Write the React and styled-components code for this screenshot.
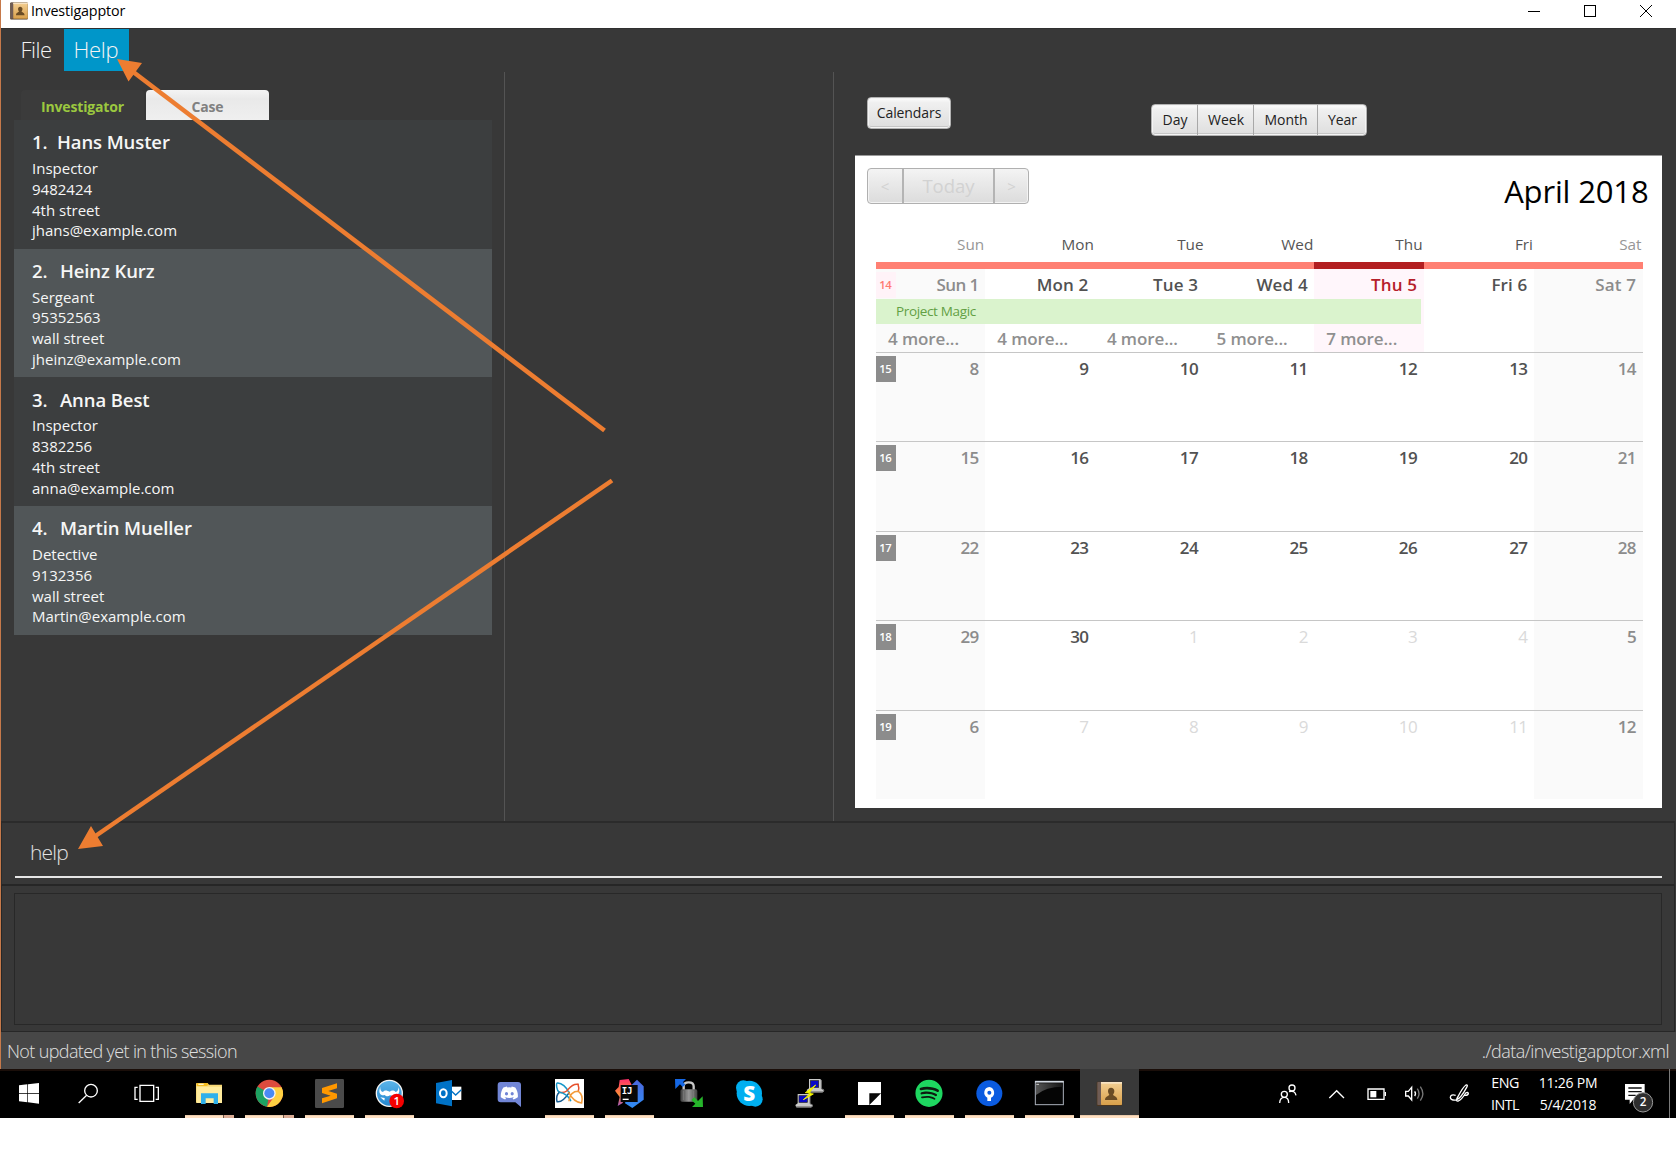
import React from "react";
import styled, { createGlobalStyle } from "styled-components";
import { FaDiscord, FaSpotify } from "react-icons/fa";

const GlobalStyle = createGlobalStyle`
  * { box-sizing: border-box; }
  body { margin: 0; background: #fff; font-family: "Open Sans", "Noto Sans", sans-serif; }
`;

const Screen = styled.div`
  position: relative;
  width: 1676px;
  height: 1155px;
  overflow: hidden;
  background: #fff;
  white-space: nowrap;
`;

/* ---------- application window ---------- */
const Window = styled.div`
  display: flex;
  flex-direction: column;
  height: 1069px;
  border-left: 1px solid #c6794a;
  background: #383838;
`;
const TitleBar = styled.div`
  display: flex;
  align-items: center;
  height: 28px;
  padding: 0 24px 7px 9px;
  background: #fff;
`;
const Title = styled.span`
  flex: 1;
  margin-left: 3px;
  font-size: 14.3px;
  letter-spacing: -0.15px;
  color: #000;
`;
const WindowButtons = styled.div`
  display: flex;
  gap: 44px;
`;
const MenuBar = styled.div`
  display: flex;
  height: 43px;
  border-top: 1px solid #303030;
`;
const MenuItem = styled.div`
  width: ${(p) => p.$width}px;
  padding-left: ${(p) => p.$pad}px;
  line-height: 40px;
  font-size: 22px;
  font-weight: 300;
  letter-spacing: ${(p) => p.$spacing}px;
  color: #f4f4f4;
  background: ${(p) => (p.$active ? "#0096c9" : "transparent")};
`;
const Panes = styled.div`
  display: flex;
  height: 750px;
`;
const Divider = styled.div`
  width: 1px;
  margin-top: 1px;
  background: #545454;
`;
const LeftPane = styled.div`
  width: 503px;
  padding: 19px 12px 0 13px;
`;
const MiddlePane = styled.div`
  width: 328px;
`;
const RightPane = styled.div`
  width: 841px;
  padding: 0 13px 0 21px;
`;

/* ---------- investigator list ---------- */
const Tabs = styled.div`
  display: flex;
  gap: 2px;
  padding-left: 7px;
`;
const Tab = styled.div`
  width: 123px;
  height: 30px;
  padding-top: 2px;
  border-radius: 4px 4px 0 0;
  text-align: center;
  line-height: 29px;
  font-size: 14px;
  font-weight: 700;
  letter-spacing: -0.15px;
  color: ${(p) => (p.$active ? "#9bc83f" : "#808080")};
  background: ${(p) => (p.$active ? "#3b3b3b" : "linear-gradient(#f4f4f4, #e9e9e9 30%, #efefef)")};
`;
const PersonCard = styled.div`
  height: 128.7px;
  padding: 9.2px 18px 0;
  color: #f6f6f6;
  background: ${(p) => (p.$alt ? "#515658" : "#3c3e3f")};
`;
const PersonName = styled.div`
  display: flex;
  gap: ${(p) => (p.$narrow ? 9.5 : 12.5)}px;
  margin-bottom: 2.8px;
  line-height: 26px;
  font-size: 18.5px;
  font-weight: 600;
  letter-spacing: -0.1px;
`;
const PersonLine = styled.div`
  line-height: 20.8px;
  font-size: 15px;
  letter-spacing: 0;
`;

/* ---------- calendar ---------- */
const CalendarTools = styled.div`
  display: flex;
  align-items: flex-start;
  height: 84px;
  padding: 26px 0 0 12px;
`;
const buttonFace = `
  border: 1px solid #b2b2b2;
  background: linear-gradient(#fdfdfd, #f0f0f0 15%, #dedede);
  box-shadow: inset 0 0 0 1px #f4f4f4, inset 0 -2px 0 #c6c6c6;
`;
const Button = styled.div`
  ${buttonFace}
  width: 84px;
  height: 32px;
  border-radius: 4px;
  text-align: center;
  line-height: 29px;
  font-size: 14px;
  letter-spacing: -0.08px;
  color: #222;
`;
const Segments = styled.div`
  ${buttonFace}
  display: flex;
  width: 216px;
  height: 32px;
  margin: 7px 0 0 200px;
  border-radius: 4px;
`;
const Segment = styled.div`
  width: ${(p) => p.$width}px;
  padding-left: 1px;
  border-left: ${(p) => (p.$first ? "0" : "1px solid #a8a8a8")};
  text-align: center;
  line-height: 29px;
  font-size: 14px;
  color: #222;
`;
const Sheet = styled.div`
  height: 653px;
  padding: 0 19.5px 0 21px;
  border-top: 1px solid #9a9a9a;
  background: #fff;
`;
const SheetHead = styled.div`
  display: flex;
  justify-content: space-between;
  height: 76px;
  margin: 0 -6px 0 -9px;
  padding-top: 12px;
`;
const NavGroup = styled.div`
  display: flex;
  width: 162px;
  height: 36px;
  border: 1px solid #b0b0b0;
  border-radius: 4px;
  background: linear-gradient(#f4f4f4, #ececec 30%, #dcdcdc);
  box-shadow: inset 0 0 0 1px #f3f3f3;
`;
const NavButton = styled.div`
  width: ${(p) => p.$width}px;
  border-left: ${(p) => (p.$first ? "0" : "2px solid #b4b4b4")};
  text-align: center;
  line-height: 34px;
  font-size: ${(p) => p.$size}px;
  color: #d2d2d2;
`;
const MonthTitle = styled.div`
  margin-top: 3px;
  line-height: 40px;
  font-size: 31px;
  letter-spacing: -0.15px;
  color: #000;
`;
const columns = "109.2px repeat(3, 109.7px) 109.3px 110.4px 1fr";
const DayNames = styled.div`
  display: grid;
  grid-template-columns: ${columns};
  height: 30px;
  line-height: 25px;
  text-align: right;
  font-size: 15.3px;
  font-weight: 500;
`;
const DayName = styled.div`
  padding-right: 1px;
  color: ${(p) => (p.$weekend ? "#969696" : "#555")};
`;
const HeaderBar = styled.div`
  display: grid;
  grid-template-columns: ${columns};
  height: 7px;
  background: #ff8073;
`;
const TodayMark = styled.div`
  grid-column: 5;
  background: #b21e20;
`;
const FirstWeek = styled.div`
  display: grid;
  grid-template-columns: ${columns};
  grid-template-rows: 30px 24.5px 28.5px;
`;
const Week = styled.div`
  display: grid;
  grid-template-columns: ${columns};
  height: 89.4px;
  border-top: 1px solid #c6c6c6;
`;
const Day = styled.div`
  display: flex;
  justify-content: space-between;
  grid-column: ${(p) => p.$col};
  grid-row: ${(p) => (p.$tall ? "1 / 4" : "1")};
  padding: ${(p) => (p.$tall ? 3.5 : 4)}px 6.5px 0 0;
  background: ${(p) => (p.$today ? "#fff6fb" : p.$weekend ? "#fafafa" : "#fff")};
`;
const toneColor = { normal: "#525252", weekend: "#8c8c8c", faded: "#dadada", today: "#b5202a" };
const DayNumber = styled.span`
  margin-left: auto;
  line-height: 24px;
  font-size: 17px;
  font-weight: ${(p) => (p.$tone === "faded" ? 500 : 600)};
  letter-spacing: ${(p) => (p.$wide ? "0.15px" : "-0.6px")};
  color: ${(p) => toneColor[p.$tone]};
`;
const WeekNumber = styled.span`
  width: 20px;
  height: 26px;
  margin-top: -1px;
  padding-right: 1.5px;
  text-align: center;
  line-height: 26px;
  font-size: 11.3px;
  font-weight: 600;
  letter-spacing: -0.4px;
  color: ${(p) => (p.$current ? "#ff7a72" : "#fff")};
  background: ${(p) => (p.$current ? "#fff3f8" : "#8c8c8c")};
`;
const EventBar = styled.div`
  grid-row: 2;
  grid-column: 1 / 6;
  margin-right: 2.5px;
  padding-left: 20px;
  line-height: 24px;
  font-size: 13.5px;
  letter-spacing: -0.35px;
  color: #62a044;
  background: #daf3cd;
`;
const More = styled.div`
  grid-row: 3;
  grid-column: ${(p) => p.$col};
  padding: 3.6px 0 0 12px;
  line-height: 24px;
  font-size: 17px;
  font-weight: 600;
  letter-spacing: -0.1px;
  color: #8f8f8f;
`;

/* ---------- command box, result box, status bar ---------- */
const CommandArea = styled.div`
  height: 65px;
  margin-right: 1px;
  padding: 0 12px 0 13px;
  border: 1px solid #2b2b2b;
  border-width: 2px 1px;
  border-bottom-color: #262626;
`;
const CommandInput = styled.div`
  height: 55px;
  padding: 6px 0 0 15px;
  border-bottom: 2px solid #e6e6e6;
  line-height: 46px;
  font-size: 21px;
  font-weight: 300;
  letter-spacing: -0.8px;
  color: #e2e2e2;
`;
const ResultArea = styled.div`
  height: 146px;
  margin-right: 1px;
  padding: 7px 12px 6px;
  border: 1px solid #272727;
  border-top: 0;
`;
const ResultBox = styled.div`
  height: 132px;
  border: 1px solid #282828;
`;
const StatusBar = styled.div`
  display: flex;
  flex: 1;
  justify-content: space-between;
  align-items: center;
  padding: 0 7px 0 6px;
  font-size: 18px;
  font-weight: 300;
  color: #e0e0e0;
  background: #474747;
`;
const StatusText = styled.span`
  letter-spacing: ${(p) => p.$spacing}px;
`;

/* ---------- taskbar ---------- */
const Taskbar = styled.div`
  display: flex;
  height: 49px;
  border-top: 2px solid #1a0e09;
  background: #000;
  color: #fff;
`;
const SystemButtons = styled.div`
  display: flex;
  width: 179px;
`;
const Task = styled.div`
  display: flex;
  flex-direction: column;
  width: 60px;
  height: 49px;
  margin-top: -2px;
  padding-left: 1px;
`;
const TaskFace = styled.div`
  display: flex;
  height: 46px;
  padding-top: 2px;
  margin-left: -1px;
  background: ${(p) => (p.$active ? "linear-gradient(90deg, transparent 1px, #393939 1px)" : "transparent")};
`;
const Underline = styled.div`
  display: flex;
  justify-content: flex-end;
  width: ${(p) => (p.$active ? 59 : 49)}px;
  height: 3px;
  margin-left: ${(p) => (p.$active ? 0 : 5)}px;
  background: ${(p) => (p.$open ? "linear-gradient(#dcbc9c, #ffe0c2 40%)" : "transparent")};
`;
const Stack = styled.div`
  width: 11px;
  border-left: 1px solid #6e5547;
  background: #d9ab94;
`;
const Tray = styled.div`
  display: flex;
  flex: 1;
  justify-content: flex-end;
`;
const TrayText = styled.div`
  width: ${(p) => p.$width}px;
  padding-top: 1.4px;
  text-align: center;
  line-height: 22px;
  font-size: ${(p) => p.$size}px;
  letter-spacing: ${(p) => p.$spacing}px;
`;
const ShowDesktop = styled.div`
  width: 7px;
  margin-top: -2px;
  border-left: 1px solid #7a7a7a;
`;
const Arrows = styled.svg`
  position: absolute;
  top: 0;
  left: 0;
`;
const IconSvg = styled.svg`
  display: block;
  flex: none;
`;
const HiddenSvg = styled.svg`
  position: absolute;
`;

/* Taskbar pictograms share a 180 x 141 canvas, three units to a pixel. */
const Glyph = ({ x, width = 60, children }) => (
  <IconSvg width={width} height="47" viewBox={`${x} 33 ${width * 3} 141`}>
    {children}
  </IconSvg>
);

const BookDrawing = () => (
  <g>
    <rect x="770" y="65" width="76" height="73" rx="3" fill="#4b3620" />
    <rect x="772" y="66" width="13" height="69" rx="2" fill="#6f5c55" />
    <rect x="783" y="66" width="63" height="69" rx="2" fill="url(#bookFace)" />
    <rect x="783" y="66" width="63" height="5" fill="#f8e4c4" />
    <path d="M813 83c-6 0-9 4-9 10 0 5 2 8 4 11-1 4-13 4-13 16h37c0-12-12-12-13-16 2-3 4-6 4-11 0-6-4-10-10-10z" fill="#6a4c25" />
  </g>
);

const Defs = () => (
  <HiddenSvg width="0" height="0">
    <defs>
      <linearGradient id="bookFace" x1="0" y1="0" x2="0" y2="1">
        <stop offset="0" stopColor="#f3cf93" />
        <stop offset="1" stopColor="#d9a04a" />
      </linearGradient>
      <linearGradient id="terminalFace" x1="0" y1="0" x2="1" y2="0">
        <stop offset="0" stopColor="#555" />
        <stop offset="1" stopColor="#151515" />
      </linearGradient>
      <linearGradient id="ideaLeft" x1="0" y1="0" x2="0" y2="1">
        <stop offset="0" stopColor="#fe2f6b" />
        <stop offset=".55" stopColor="#fd8a3a" />
        <stop offset="1" stopColor="#a455b8" />
      </linearGradient>
      <linearGradient id="ideaRight" x1="0" y1="0" x2="0" y2="1">
        <stop offset="0" stopColor="#4d66dc" />
        <stop offset="1" stopColor="#2f8df5" />
      </linearGradient>
      <linearGradient id="lockFace" x1="0" y1="0" x2="1" y2="0">
        <stop offset="0" stopColor="#3c3c3c" />
        <stop offset=".5" stopColor="#9a9a9a" />
        <stop offset="1" stopColor="#444" />
      </linearGradient>
      <linearGradient id="sky" x1="0" y1="0" x2="0" y2="1">
        <stop offset="0" stopColor="#5db5ea" />
        <stop offset="1" stopColor="#2387cf" />
      </linearGradient>
    </defs>
  </HiddenSvg>
);

const Explorer = () => (
  <Glyph x={537}>
    <path d="M588 72q0-3 3-3h31l5 5h39v54H588z" fill="#f7d774" />
    <path d="M590 80h76v49h-76z" fill="#ffeb9c" />
    <path d="M590 69h30q5 0 5 4t-5 5h-30z" fill="#f5bd20" />
    <path d="M595 71h16v4h-16z" fill="#fff6d0" />
    <path d="M603 132v-32h51v32h-13v-17h-24v17z" fill="#2fb0ea" />
  </Glyph>
);
const Chrome = () => (
  <Glyph x={717}>
    <circle cx="808" cy="100" r="41" fill="#dd4b3e" />
    <path d="M808 100L772 80a41 41 0 0 0 29 60z" fill="#1da262" />
    <path d="M808 100L790 111 772 80z" fill="#1da262" />
    <path d="M808 82h37a41 41 0 0 1-44 58l23-32z" fill="#ffd042" />
    <circle cx="808" cy="100" r="19" fill="#f4f4f4" />
    <circle cx="808" cy="100" r="15" fill="#4a8af4" />
  </Glyph>
);
const Sublime = () => (
  <Glyph x={897}>
    <rect x="945" y="57" width="87" height="87" rx="4" fill="#4a4a4a" />
    <path d="M966 84l45-14v15l-26 8 26 8v14l-45 15v-15l26-8-26-8z" fill="#ff9800" />
  </Glyph>
);
const Messenger = () => (
  <Glyph x={1077}>
    <circle cx="1168" cy="100" r="39" fill="url(#sky)" stroke="#f4f4f4" strokeWidth="4" />
    <path d="M1141 81c-1 8 2 14 8 15 6-8 13-4 20-1 6-4 12-5 18 1 7-2 9-8 8-15 6 13 2 24-9 27-7 2-11-2-16-2-6 5-12 3-16-1-8 4-22-3-13-24z" fill="#fff" />
    <path d="M1141 112l13 2-1 8z" fill="#fff" />
    <circle cx="1190" cy="123" r="22" fill="#f40000" />
    <text x="1190" y="135" textAnchor="middle" fontFamily="Open Sans, sans-serif" fontSize="34" fontWeight="600" fill="#fff">1</text>
  </Glyph>
);
const Outlook = () => (
  <Glyph x={-3}>
    <rect x="84" y="80" width="40" height="40" fill="#fff" />
    <path d="M94 93l13 12 17-16" fill="none" stroke="#0072c6" strokeWidth="4" />
    <path d="M48 69l48-9v79l-48-9z" fill="#0072c6" />
    <ellipse cx="70" cy="100" rx="10" ry="12" fill="none" stroke="#fff" strokeWidth="6" />
  </Glyph>
);
const Discord = () => (
  <Glyph x={177}>
    <path d="M242 66h52q9 0 9 9v66l-17-14h-44q-9 0-9-9V75q0-9 9-9z" fill="#7286d6" />
    <FaDiscord x="240" y="71" size={56} color="#fff" />
  </Glyph>
);
const Butterfly = () => (
  <Glyph x={357}>
    <rect x="405" y="57" width="87" height="87" fill="#fff" />
    <g fill="none" strokeWidth="4.5" strokeLinejoin="round" strokeLinecap="round">
      <path d="M446 97C440 82 425 68 412 69c-4 1-3 22 6 28" stroke="#1596c8" />
      <path d="M474 73c-18-3-26 12-34 20-6 5-14 5-22 4" stroke="#e6512d" />
      <path d="M474 73c3 8 3 15 1 21" stroke="#e6512d" />
      <path d="M418 97c-8 6-9 18-7 28 16 3 28-14 37-28" stroke="#155b91" />
      <path d="M418 97c16 2 26 10 34 25" stroke="#1596c8" />
      <path d="M475 94c-18 0-26 12-28 28M475 94c12 8 13 22 10 35-17-2-30-14-39-32" stroke="#f39a38" />
    </g>
  </Glyph>
);
const Idea = () => (
  <Glyph x={537}>
    <path d="M651 59l20 20v40l-34 25-22-14 16-51z" fill="url(#ideaRight)" />
    <path d="M599 60l27-3 12 23-31 50-14 8 6-27-14-19 11-11z" fill="url(#ideaLeft)" />
    <rect x="602" y="75" width="51" height="51" fill="#080808" />
    <text x="605" y="103" fontFamily="DejaVu Sans Mono, monospace" fontSize="27" fontWeight="700" fill="#fff">IJ</text>
    <path d="M608 118h18" stroke="#fff" strokeWidth="4" />
  </Glyph>
);
const Lock = () => (
  <Glyph x={717}>
    <path d="M791 90V79q0-12 15-12t15 12v11" fill="none" stroke="#c9c9c9" strokeWidth="7" />
    <rect x="781" y="88" width="51" height="37" rx="5" fill="url(#lockFace)" />
    <path d="M790 92v28M800 92v28M811 92v28M821 92v28" stroke="#858585" strokeWidth="2" />
    <path d="M765 57h33l-9 9 7 8-8 7-8-8-14 14z" fill="#1568e6" />
    <path d="M849 141h-33l10-10-12-11 9-9 11 12 14-14z" fill="#26b52b" />
  </Glyph>
);
const Skype = () => (
  <Glyph x={897}>
    <circle cx="970" cy="83" r="22" fill="#00aff0" />
    <circle cx="1006" cy="118" r="22" fill="#00aff0" />
    <circle cx="988" cy="100" r="38" fill="#00aff0" />
    <text x="988" y="122" textAnchor="middle" fontFamily="Open Sans, sans-serif" fontSize="62" fontWeight="800" fill="#fff">S</text>
  </Glyph>
);
const Computer = ({ x, y }) => (
  <g transform={`translate(${x} ${y})`}>
    <path d="M6 0h34l3 3v26l7 4v6L43 38H1l-2-5 7-5z" fill="#c9c9c9" />
    <path d="M40 2l3 2v25l8 4-4 7H2" fill="none" stroke="#777" strokeWidth="3" />
    <rect x="10" y="5" width="25" height="20" fill="#0808c8" stroke="#222" strokeWidth="2" />
  </g>
);
const Putty = () => (
  <Glyph x={1077}>
    <Computer x={1161} y={57} />
    <Computer x={1127} y={102} />
    <path d="M1187 75l-31 23 17 1-23 20 30-17-14-2z" fill="#ffff00" stroke="#e8e800" strokeWidth="3" />
  </Glyph>
);
const Sticky = () => (
  <Glyph x={-3}>
    <path d="M54 66h69v34H88v35H54z" fill="#fff" />
    <path d="M91 103h27l-27 27z" fill="#0a0a0a" />
    <path d="M123 100v35H88z" fill="#fff" />
  </Glyph>
);
const Spotify = () => (
  <Glyph x={177}>
    <circle cx="267" cy="100" r="38" fill="#0d1a10" />
    <FaSpotify x="225" y="58" size={84} color="#1ed760" />
  </Glyph>
);
const SourceTree = () => (
  <Glyph x={357}>
    <circle cx="448" cy="100" r="39" fill="#0b5be0" />
    <path d="M448 81a17 17 0 0 0-6 32v10h11v-10a17 17 0 0 0-5-32z" fill="#fff" />
    <circle cx="448" cy="98" r="6" fill="#0b5be0" />
  </Glyph>
);
const Terminal = () => (
  <Glyph x={537}>
    <rect x="586" y="65" width="84" height="69" fill="#050505" stroke="#aab0bb" strokeWidth="3" />
    <path d="M588 70h80v10q-50 0-80 25z" fill="url(#terminalFace)" />
    <path d="M585 65h86" stroke="#d4dae2" strokeWidth="5" />
    <path d="M589 73h8" stroke="#ccc" strokeWidth="3" />
  </Glyph>
);
const AddressBook = () => (
  <Glyph x={717}>
    <BookDrawing />
  </Glyph>
);

const tasks = [
  { Icon: Explorer, open: true, stacked: true },
  { Icon: Chrome, open: true, stacked: true },
  { Icon: Sublime, open: true },
  { Icon: Messenger, open: true },
  { Icon: Outlook },
  { Icon: Discord },
  { Icon: Butterfly, open: true },
  { Icon: Idea, open: true },
  { Icon: Lock },
  { Icon: Skype },
  { Icon: Putty },
  { Icon: Sticky, open: true },
  { Icon: Spotify, open: true },
  { Icon: SourceTree, open: true },
  { Icon: Terminal, open: true },
  { Icon: AddressBook, open: true, active: true },
];

const people = [
  ["Hans Muster", "Inspector", "9482424", "4th street", "jhans@example.com"],
  ["Heinz Kurz", "Sergeant", "95352563", "wall street", "jheinz@example.com"],
  ["Anna Best", "Inspector", "8382256", "4th street", "anna@example.com"],
  ["Martin Mueller", "Detective", "9132356", "wall street", "Martin@example.com"],
];

const dayNames = ["Sun", "Mon", "Tue", "Wed", "Thu", "Fri", "Sat"];
const moreCounts = [4, 4, 4, 5, 7];
const weeks = [
  { number: 15, days: [8, 9, 10, 11, 12, 13, 14] },
  { number: 16, days: [15, 16, 17, 18, 19, 20, 21] },
  { number: 17, days: [22, 23, 24, 25, 26, 27, 28] },
  { number: 18, days: [29, 30, 1, 2, 3, 4, 5], fadedFrom: 2 },
  { number: 19, days: [6, 7, 8, 9, 10, 11, 12], fadedFrom: 0 },
];
const isWeekend = (i) => i === 0 || i === 6;

const Calendar = () => (
  <Sheet>
    <SheetHead>
      <NavGroup>
        <NavButton $first $width={34} $size={15}>&lt;</NavButton>
        <NavButton $width={91.5} $size={18.5}>Today</NavButton>
        <NavButton $width={35} $size={15}>&gt;</NavButton>
      </NavGroup>
      <MonthTitle>April 2018</MonthTitle>
    </SheetHead>
    <DayNames>
      {dayNames.map((name, i) => (
        <DayName key={name} $weekend={isWeekend(i)}>{name}</DayName>
      ))}
    </DayNames>
    <HeaderBar><TodayMark /></HeaderBar>
    <FirstWeek>
      {dayNames.map((name, i) => (
        <Day key={name} $tall $col={i + 1} $weekend={isWeekend(i)} $today={i === 4}>
          {i === 0 && <WeekNumber $current>14</WeekNumber>}
          <DayNumber $wide={i > 0} $tone={i === 4 ? "today" : isWeekend(i) ? "weekend" : "normal"}>
            {name} {i + 1}
          </DayNumber>
        </Day>
      ))}
      <EventBar>Project Magic</EventBar>
      {moreCounts.map((count, i) => (
        <More key={i} $col={i + 1}>{count} more...</More>
      ))}
    </FirstWeek>
    {weeks.map((week) => (
      <Week key={week.number}>
        {week.days.map((day, i) => (
          <Day key={day} $col={i + 1} $weekend={isWeekend(i)}>
            {i === 0 && <WeekNumber>{week.number}</WeekNumber>}
            <DayNumber $tone={isWeekend(i) ? "weekend" : i >= (week.fadedFrom ?? 7) ? "faded" : "normal"}>
              {day}
            </DayNumber>
          </Day>
        ))}
      </Week>
    ))}
  </Sheet>
);

export default function App() {
  return (
    <Screen>
      <GlobalStyle />
      <Defs />
      <Window>
        <TitleBar>
          <IconSvg width="18" height="18" viewBox="769 64 78 75"><BookDrawing /></IconSvg>
          <Title>Investigapptor</Title>
          <WindowButtons>
            <IconSvg width="12" height="12"><path d="M0 6.5h12" stroke="#000" /></IconSvg>
            <IconSvg width="12" height="12"><rect x=".5" y=".5" width="11" height="11" fill="none" stroke="#000" /></IconSvg>
            <IconSvg width="12" height="12"><path d="M0 0l12 12M12 0L0 12" stroke="#000" /></IconSvg>
          </WindowButtons>
        </TitleBar>
        <MenuBar>
          <MenuItem $width={63} $pad={19.5} $spacing={-0.5}>File</MenuItem>
          <MenuItem $active $width={65} $pad={9.5} $spacing={-0.3}>Help</MenuItem>
        </MenuBar>
        <Panes>
          <LeftPane>
            <Tabs>
              <Tab $active>Investigator</Tab>
              <Tab>Case</Tab>
            </Tabs>
            {people.map(([name, ...lines], i) => (
              <PersonCard key={name} $alt={i % 2 === 1}>
                <PersonName $narrow={i === 0}><span>{i + 1}.</span><span>{name}</span></PersonName>
                {lines.map((line) => <PersonLine key={line}>{line}</PersonLine>)}
              </PersonCard>
            ))}
          </LeftPane>
          <Divider />
          <MiddlePane />
          <Divider />
          <RightPane>
            <CalendarTools>
              <Button>Calendars</Button>
              <Segments>
                <Segment $first $width={45}>Day</Segment>
                <Segment $width={56}>Week</Segment>
                <Segment $width={64}>Month</Segment>
                <Segment $width={49}>Year</Segment>
              </Segments>
            </CalendarTools>
            <Calendar />
          </RightPane>
        </Panes>
        <CommandArea>
          <CommandInput>help</CommandInput>
        </CommandArea>
        <ResultArea><ResultBox /></ResultArea>
        <StatusBar>
          <StatusText $spacing={-0.63}>Not updated yet in this session</StatusText>
          <StatusText $spacing={-0.54}>./data/investigapptor.xml</StatusText>
        </StatusBar>
      </Window>

      <Taskbar>
        <SystemButtons>
          <Glyph x={0}>
            <path d="M57 76l25-3v26H57zM84 73l33-4v30H84zM57 101h25v26l-25-3zM84 101h33v30l-33-4z" fill="#fff" />
          </Glyph>
          <Glyph x={180}>
            <circle cx="273" cy="92" r="19" fill="none" stroke="#fff" strokeWidth="4" />
            <path d="M260 106l-24 23" stroke="#fff" strokeWidth="4" />
          </Glyph>
          <Glyph x={360} width={59}>
            <path d="M420 76h41v48h-41zM413 82h-8v36h8M467 82h8v36h-8" fill="none" stroke="#fff" strokeWidth="4" />
          </Glyph>
        </SystemButtons>
        {tasks.map(({ Icon, open, stacked, active }, i) => (
          <Task key={i}>
            <TaskFace $active={active}><Icon /></TaskFace>
            <Underline $open={open} $active={active}>{stacked && <Stack />}</Underline>
          </Task>
        ))}
        <Tray>
          {/* people, overflow chevron, battery, volume, pen */}
          <IconSvg width="217" height="47" viewBox="50 153 651 141">
            <g fill="none" stroke="#fff" strokeWidth="4">
              <circle cx="107" cy="204" r="9" />
              <circle cx="84" cy="223" r="9" />
              <path d="M70 249q1-17 14-17t13 17M98 215q18-5 21 11" />
              <path d="M219 234l22-22 22 22" />
              <path d="M335 207h48v31h-48z" />
              <path d="M387 216v12" />
              <path d="M448 214h8l10-12v38l-10-12h-8z" />
              <path d="M475 214q5 7 0 14" />
              <path d="M483 206q10 15 0 30M492 200q15 21 0 42" stroke="#777" />
              <path d="M598 226q-15-4-16 6 1 10 17 8 14-4 32-38 5-8-2-7-8 4-27 40-4 10 4 8 10-4 22-24 7-4 8 2-1 6-12 5" />
            </g>
            <rect x="342" y="213" width="18" height="19" fill="#fff" />
          </IconSvg>
          <TrayText $width={30} $size={14.3} $spacing={-0.5}>ENG<br />INTL</TrayText>
          <TrayText $width={96} $size={14} $spacing={-0.2}>11:26 PM<br />5/4/2018</TrayText>
          <IconSvg width="53" height="47" viewBox="1080 153 159 141">
            <path d="M1107 192h59v47h-35l-10 13v-13h-14z" fill="#fff" />
            <path d="M1117 204h40M1117 215h40M1117 226h22" stroke="#111" strokeWidth="4" />
            <circle cx="1161" cy="247" r="29" fill="#2e2e2e" stroke="#999" strokeWidth="3" />
            <text x="1161" y="259" textAnchor="middle" fontFamily="Open Sans, sans-serif" fontSize="35" fontWeight="600" fill="#fff">2</text>
          </IconSvg>
          <ShowDesktop />
        </Tray>
      </Taskbar>

      <Arrows width="1676" height="1155" viewBox="0 0 1676 1155">
        <g stroke="#ed7d31" strokeWidth="4.5">
          <path d="M604.5 430.5L132 71" />
          <path d="M612 480.5L94 837" />
        </g>
        <path d="M117 59l25 4-13.500 18.500zM78 849l13-23 12 20z" fill="#ed7d31" />
      </Arrows>
    </Screen>
  );
}
